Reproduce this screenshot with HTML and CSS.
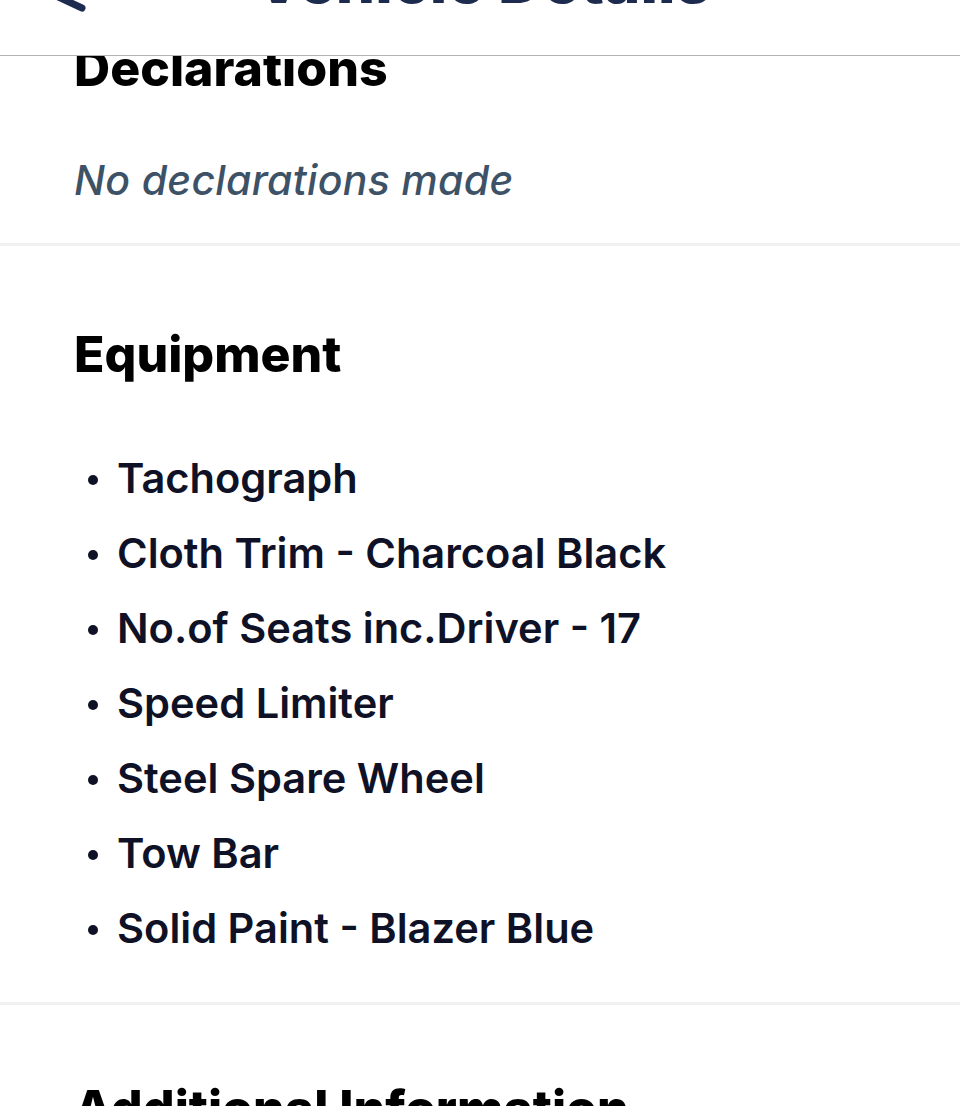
FILE: index.html
```html
<!DOCTYPE html>
<html>
<head>
<meta charset="utf-8">
<link rel="stylesheet" href="styles.css">
</head>
<body>
<header class="topbar">
  <div class="topbar-inner">
    <svg class="back" width="60" height="60" viewBox="0 0 60 60"><path d="M46 21 L18 34 L46 47" fill="none" stroke="#1d2b4f" stroke-width="7" stroke-linecap="round" stroke-linejoin="round"/></svg>
    <h1 class="title">Vehicle Details</h1>
  </div>
</header>
<main class="page">
  <section class="section sec-decl">
    <h2 class="heading">Declarations</h2>
    <p class="empty">No declarations made</p>
  </section>
  <section class="section sec-equip">
    <h2 class="heading">Equipment</h2>
    <ul class="items">
      <li>Tachograph</li>
      <li>Cloth Trim - Charcoal Black</li>
      <li>No.of Seats inc.Driver - 17</li>
      <li>Speed Limiter</li>
      <li>Steel Spare Wheel</li>
      <li>Tow Bar</li>
      <li>Solid Paint - Blazer Blue</li>
    </ul>
  </section>
  <section class="section sec-add">
    <h2 class="heading">Additional Information</h2>
  </section>
</main>
</body>
</html>
```
FILE: styles.css
```css
html, body {
  margin: 0;
  padding: 0;
  background: #ffffff;
}
body {
  width: 960px;
  height: 1106px;
  overflow: hidden;
  font-family: "Inter", "Liberation Sans", sans-serif;
}
.topbar {
  position: fixed;
  top: 0;
  left: 0;
  right: 0;
  height: 55px;
  background: #ffffff;
  border-bottom: 1px solid #b4b4b4;
  overflow: hidden;
  z-index: 2;
}
.topbar-inner {
  position: relative;
  height: 55px;
  display: flow-root;
}
.back {
  position: absolute;
  left: 36px;
  top: -39px;
}
.title {
  margin: 0;
  margin-top: -50px;
  text-align: center;
  font-family: "Inter", "Liberation Sans", sans-serif;
  font-weight: 800;
  font-size: 62px;
  line-height: 62px;
  color: #1d2b4f;
  padding-left: 6px;
}
.page {
  display: flex;
  flex-direction: column;
}
.section {
  padding-left: 74px;
  padding-right: 74px;
}
.sec-decl {
  padding-top: 38px;
  padding-bottom: 38px;
  border-bottom: 3px solid #f1f1f1;
}
.sec-equip {
  padding-top: 78px;
  padding-bottom: 36px;
  border-bottom: 3px solid #f1f1f1;
}
.sec-add {
  padding-top: 73px;
}
.heading {
  margin: 0;
  font-family: "Inter", "Liberation Sans", sans-serif;
  font-weight: 800;
  font-size: 50px;
  line-height: 60px;
  color: #000000;
}
.empty {
  margin: 57px 0 0 0;
  font-style: italic;
  font-weight: 500;
  font-size: 41px;
  line-height: 50px;
  color: #3d5266;
  letter-spacing: 0.3px;
}
.items {
  list-style: none;
  margin: 57px 0 0 0;
  padding: 0 0 0 43px;
}
.items li {
  position: relative;
  font-size: 41.6px;
  line-height: 75px;
  font-weight: 600;
  color: #0f1226;
}
.items li::before {
  content: "";
  position: absolute;
  left: -29px;
  top: 34px;
  width: 10px;
  height: 10px;
  border-radius: 50%;
  background: #0f1226;
}
```
